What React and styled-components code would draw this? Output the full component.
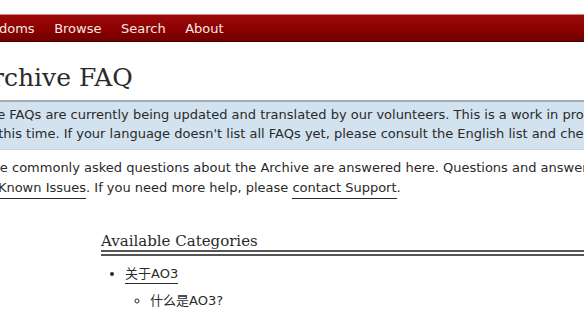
import React from 'react'
import styled, { createGlobalStyle } from 'styled-components'

const GlobalStyle = createGlobalStyle`
  html, body {
    margin: 0;
    padding: 0;
    background: #fff;
    overflow: hidden;
  }
  body {
    font-family: "DejaVu Sans", "Noto Sans CJK SC", sans-serif;
    font-size: 13px;
    color: #2a2a2a;
  }
`

const Page = styled.div`
  width: 1100px;
  padding-top: 14px;
`

const NavBar = styled.nav`
  height: 28px;
  background: linear-gradient(#9c0a0a, #8a0000 60%, #6e0000);
  border-top: 1px solid #c98a8a;
  border-bottom: 1px solid #4a0000;
  box-sizing: border-box;
  display: flex;
  align-items: center;
  gap: 19.5px;
  margin-left: -23.5px;
`

const NavLink = styled.a`
  color: #f6e8e8;
  font-size: 13px;
  text-decoration: none;
  cursor: pointer;
`

const Main = styled.main`
  margin-left: -29px;
`

const Title = styled.h2`
  font-family: "DejaVu Serif", Georgia, serif;
  font-weight: normal;
  font-size: 25px;
  line-height: 28px;
  margin: 22px 0 8px 3px;
  color: #2a2a2a;
`

const Notice = styled.div`
  background: #d3e2ef;
  border-top: 2px solid #a3adb6;
  border-bottom: 1px solid #c6d4e0;
  line-height: 19px;
  padding: 3px 0 6px 30px;
  margin-left: -20px;
  white-space: nowrap;
`

const Intro = styled.p`
  line-height: 20px;
  margin: 8px 0 0;
  white-space: nowrap;
`

const Link = styled.a`
  color: #2a2a2a;
  text-decoration: none;
  border-bottom: 1px solid #2a2a2a;
  padding-bottom: ${p => (p.$pad ? p.$pad : 3)}px;
  cursor: pointer;
`

const Categories = styled.section`
  margin: 34px 0 0 130px;
`

const CategoryHeading = styled.h3`
  font-family: "DejaVu Serif", Georgia, serif;
  font-weight: normal;
  font-size: 15px;
  line-height: 18px;
  margin: 0;
  border-bottom: 6px double #555;
  color: #2a2a2a;
`

const List = styled.ul`
  list-style: ${p => (p.$sub ? 'circle' : 'disc')};
  margin: ${p => (p.$sub ? '7px' : '8px')} 0 0;
  padding-left: ${p => (p.$sub ? '25px' : '24px')};
  line-height: 20px;
`

const Item = styled.li``

export default function App() {
  return (
    <Page>
      <GlobalStyle />
      <NavBar>
        <NavLink>Fandoms</NavLink>
        <NavLink>Browse</NavLink>
        <NavLink>Search</NavLink>
        <NavLink>About</NavLink>
      </NavBar>
      <Main>
        <Title>Archive FAQ</Title>
        <Notice>
          The FAQs are currently being updated and translated by our volunteers. This is a work in progress and not all information will be available in all languages
          <br />
          at this time. If your language doesn't list all FAQs yet, please consult the English list and check for updates later.
        </Notice>
        <Intro>
          Some commonly asked questions about the Archive are answered here. Questions and answers about current issues are listed in
          <br />
          see <Link>Known Issues</Link>. If you need more help, please <Link>contact Support</Link>.
        </Intro>
        <Categories>
          <CategoryHeading>Available Categories</CategoryHeading>
          <List>
            <Item>
              <Link $pad={2}>关于AO3</Link>
              <List $sub>
                <Item>什么是AO3?</Item>
              </List>
            </Item>
          </List>
        </Categories>
      </Main>
    </Page>
  )
}
